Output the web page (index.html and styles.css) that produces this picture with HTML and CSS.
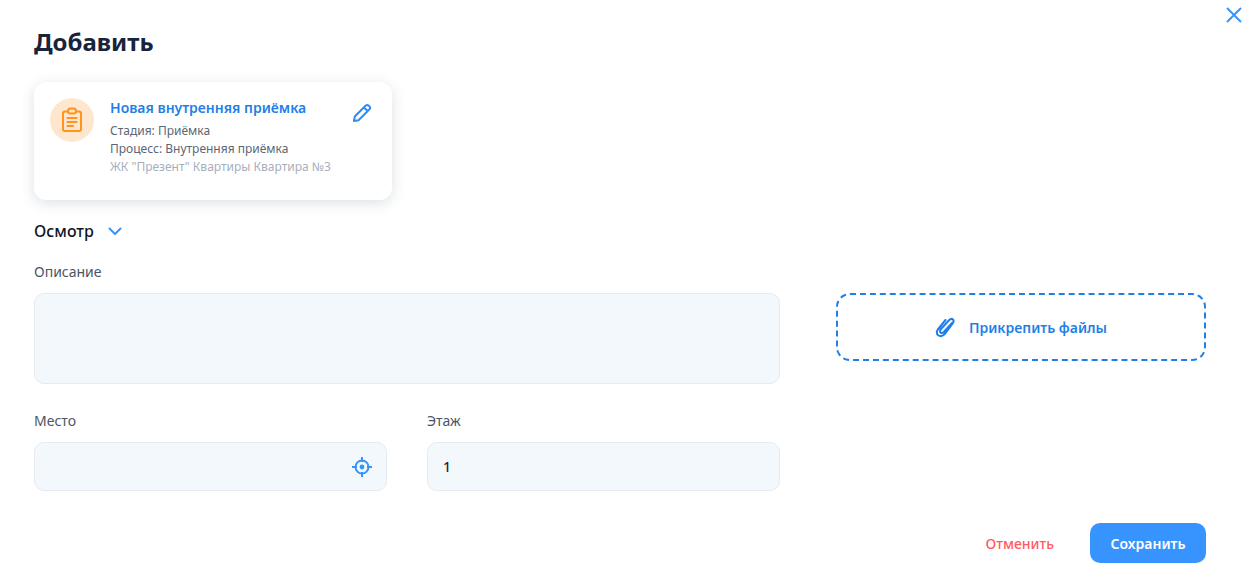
FILE: index.html
```html
<!DOCTYPE html>
<html lang="ru">
<head>
<meta charset="utf-8">
<title>Добавить</title>
<link rel="stylesheet" href="styles.css">
</head>
<body>
<main class="dialog">
  <button class="close" aria-label="Закрыть">
    <svg width="18" height="18" viewBox="0 0 18 18" fill="none" stroke="#3794ff" stroke-width="2"><path d="M2 2 16 16M16 2 2 16"/></svg>
  </button>
  <h1 class="title">Добавить</h1>
  <section class="card">
    <div class="avatar">
      <svg width="22" height="26" viewBox="0 0 22 26" fill="none" stroke="#ff9419" stroke-width="2" stroke-linecap="round" stroke-linejoin="round">
        <path d="M7 4.500H4Q2 4.500 2 6.500V22Q2 24 4 24H18Q20 24 20 22V6.500Q20 4.500 18 4.500H15"/>
        <rect x="7" y="1.500" width="8" height="5" rx="2.500"/>
        <path d="M6.500 11H15.500M6.500 15H15.500M6.500 19H12"/>
      </svg>
    </div>
    <div class="card-body">
      <div class="card-title">Новая внутренняя приёмка</div>
      <div class="card-line">Стадия: Приёмка</div>
      <div class="card-line">Процесс: Внутренняя приёмка</div>
      <div class="card-line muted">ЖК "Презент" Квартиры Квартира №3</div>
    </div>
    <svg class="pencil" width="20" height="20" viewBox="0 0 20 20" fill="none" stroke="#2f8cf5" stroke-width="2" stroke-linejoin="round"><path d="M2 18 2.800 13.500 13.800 2.500Q15.200 1.300 16.800 2.700L17.500 3.400Q18.800 4.800 17.500 6.200L6.500 17.200ZM12 4.500 15.500 8"/></svg>
  </section>
  <div class="section-head">
    <span class="section-name">Осмотр</span>
    <svg width="14" height="9" viewBox="0 0 14 9" fill="none" stroke="#3794ff" stroke-width="2" stroke-linecap="round" stroke-linejoin="round"><path d="M1.500 1.500 7 7 12.500 1.500"/></svg>
  </div>
  <div class="columns">
    <div class="form">
      <label class="label">Описание</label>
      <div class="field area"></div>
      <div class="row">
        <div class="col">
          <label class="label">Место</label>
          <div class="field input">
            <svg class="target" width="22" height="22" viewBox="0 0 22 22" fill="none" stroke="#3794ff" stroke-width="2"><circle cx="11" cy="11" r="6.500"/><circle cx="11" cy="11" r="2.400" fill="#3794ff" stroke="none"/><path d="M11 1V6M11 16V21M1 11H6M16 11H21"/></svg>
          </div>
        </div>
        <div class="col">
          <label class="label">Этаж</label>
          <div class="field input value">1</div>
        </div>
      </div>
    </div>
    <div class="attach">
      <svg width="20" height="22" viewBox="0 0 20 22" fill="none" stroke="#1f7fe8" stroke-width="2" stroke-linecap="round" stroke-linejoin="round"><path d="M17.500 6.500 8.800 16Q6.800 17.800 5.500 16.500 4.300 15 6 13L14 4.300Q16.300 2 18 3.500 19.500 5.300 17.300 7.800L9.500 18.300Q6.500 21.200 3.500 19.500 .500 17.300 2.800 13.500L10.500 4"/></svg>
      <span>Прикрепить файлы</span>
    </div>
  </div>
  <footer class="actions">
    <button class="cancel">Отменить</button>
    <button class="save">Сохранить</button>
  </footer>
</main>
</body>
</html>
```
FILE: styles.css
```css
* { box-sizing: border-box; }
html, body { margin: 0; height: 100%; background: #fff; }
body { font-family: "Noto Sans", "Open Sans", sans-serif; color: #18243a; overflow: hidden; }
.dialog { position: relative; height: 576px; padding: 25px 43px 0 34px; display: flex; flex-direction: column; }
.close { position: absolute; top: 6px; right: 6px; width: 18px; height: 18px; padding: 0; border: 0; background: none; line-height: 0; }
.title { margin: 0; font-size: 24px; line-height: 33px; font-weight: 700; color: #18243a; }
.card { margin-top: 24px; width: 358px; height: 118px; padding: 16px 20px 0 16px; background: #fff; border-radius: 12px; display: flex; align-items: flex-start; box-shadow: 0 3px 14px rgba(40, 60, 90, .16); }
.avatar { flex: none; width: 44px; height: 44px; border-radius: 50%; background: #ffe6cf; display: flex; align-items: center; justify-content: center; }
.card-body { flex: 1; margin-left: 16px; }
.card-title { font-size: 14px; line-height: 20px; font-weight: 600; color: #1f7fe8; margin-bottom: 4px; }
.card-line { font-size: 12px; line-height: 18px; color: #5b6676; }
.card-line.muted { color: #a7afba; }
.pencil { flex: none; margin-top: 5px; }
.section-head { margin-top: 20px; height: 22px; display: flex; align-items: center; gap: 14px; }
.section-name { font-size: 16px; line-height: 22px; font-weight: 500; color: #10151f; }
.columns { margin-top: 20px; display: flex; gap: 56px; align-items: flex-start; }
.form { width: 746px; flex: none; }
.label { display: block; font-size: 14px; line-height: 20px; color: #4b5565; }
.field { background: #f3f8fc; border: 1px solid #e6ebf1; border-radius: 10px; }
.area { margin-top: 11px; height: 91px; }
.row { margin-top: 27px; display: flex; gap: 40px; }
.col { flex: 1; }
.input { margin-top: 11px; height: 49px; display: flex; align-items: center; justify-content: flex-end; padding: 0 13px 0 15px; }
.value { justify-content: flex-start; font-size: 14px; font-weight: 500; color: #18243a; }
.attach { margin-top: 31px; flex: 1; height: 68px; border: 2px dashed #1f7fe8; border-radius: 14px; display: flex; align-items: center; justify-content: center; gap: 14px; font-size: 14px; font-weight: 600; color: #1f7fe8; }
.actions { margin-top: 32px; display: flex; justify-content: flex-end; align-items: center; gap: 36px; }
.actions button { font-family: inherit; font-size: 14px; border: 0; cursor: pointer; }
.cancel { background: none; padding: 0; color: #ff5a5f; font-weight: 500; }
.save { width: 116px; height: 40px; border-radius: 10px; background: #3794ff; color: #fff; font-weight: 600; }
```
